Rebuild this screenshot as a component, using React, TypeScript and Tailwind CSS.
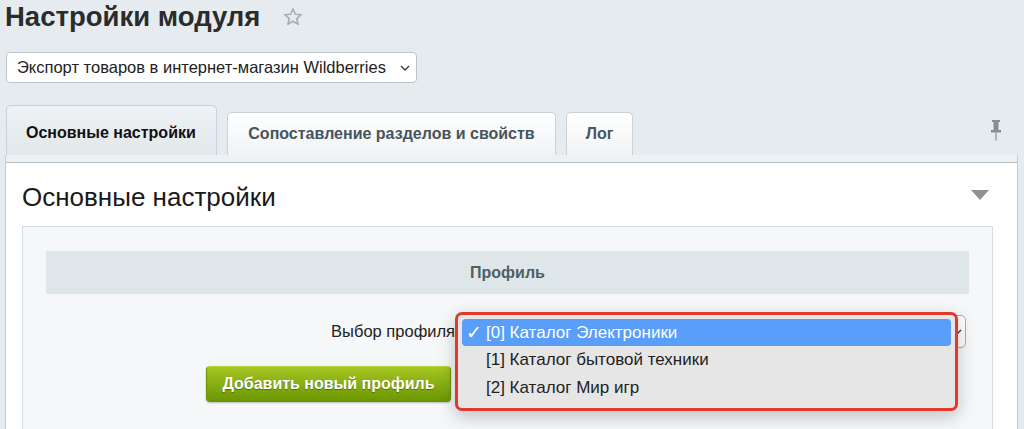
import React from "react";

const menuItems = [
  "[0] Каталог Электроники",
  "[1] Каталог бытовой техники",
  "[2] Каталог Мир игр",
];

function Star() {
  return (
    <svg width="20" height="20" viewBox="0 0 20 20" className="ml-[23px]">
      <path
        d="M10 1.8 L12.3 7.2 L18.2 7.7 L13.7 11.5 L15.1 17.3 L10 14.2 L4.9 17.3 L6.3 11.5 L1.8 7.7 L7.7 7.2 Z"
        fill="none"
        stroke="#a4aeb6"
        strokeWidth="1.6"
        strokeLinejoin="round"
      />
    </svg>
  );
}

function Pin() {
  return (
    <svg width="12" height="21" viewBox="0 0 12 21">
      <rect x="2" y="0" width="8" height="2" fill="#878e93" />
      <rect x="3.5" y="2" width="5" height="8" fill="#878e93" />
      <rect x="1" y="10" width="10" height="2.5" fill="#878e93" />
      <rect x="5.4" y="12.5" width="1.2" height="8" fill="#878e93" />
    </svg>
  );
}

function Chevron({ className }: { className?: string }) {
  return (
    <svg width="10" height="6" viewBox="0 0 10 6" className={className}>
      <path d="M1 1 L5 5 L9 1" fill="none" stroke="#333" strokeWidth="1.3" />
    </svg>
  );
}

function App() {
  return (
    <div className="w-[1024px] h-[429px] overflow-hidden bg-[#e5ebee] font-['Liberation_Sans',Arial,sans-serif]">
      {/* title */}
      <div className="flex items-center pl-[5px] mt-[2px] h-[30px]">
        <h1 className="text-[27.5px] leading-[30px] font-bold text-[#2b2b2b] whitespace-nowrap">Настройки модуля</h1>
        <Star />
      </div>

      {/* module select */}
      <div className="ml-[6px] mt-[20px] w-[411px] h-[31px] flex items-center justify-between pl-[10px] pr-[6px] bg-white border border-[#bfc4c8] rounded-[4px]">
        <span className="text-[16.5px] text-[#222] whitespace-nowrap">Экспорт товаров в интернет-магазин Wildberries</span>
        <Chevron />
      </div>

      {/* tabs */}
      <div className="flex items-end gap-[10px] ml-[6px] mt-[22px] h-[50px]">
        <div className="w-[211px] h-[50px] flex items-center pt-[4px] pl-[19px] rounded-t-[5px] border border-b-0 border-[#c8d1d5] bg-gradient-to-b from-[#eef2f4] to-[#e1e7ea]">
          <span className="text-[16px] font-bold text-[#111] whitespace-nowrap">Основные настройки</span>
        </div>
        <div className="w-[329px] h-[43px] flex items-center justify-center rounded-t-[5px] border border-b-0 border-[#c8d1d5] bg-gradient-to-b from-[#ffffff] to-[#f0f3f5]">
          <span className="text-[16px] font-bold text-[#46545c] whitespace-nowrap">Сопоставление разделов и свойств</span>
        </div>
        <div className="w-[67px] h-[43px] flex items-center justify-center rounded-t-[5px] border border-b-0 border-[#c8d1d5] bg-gradient-to-b from-[#ffffff] to-[#f0f3f5]">
          <span className="text-[16px] font-bold text-[#46545c]">Лог</span>
        </div>
        <div className="ml-auto self-start mt-[15px] mr-[22px]">
          <Pin />
        </div>
      </div>

      {/* panel */}
      <div className="ml-[5px] w-[1013px] border-x border-[#c4cdd2] bg-white">
        <div className="h-[8px] bg-[#edf1f3] border-b border-[#b3bdc2]" />
        <div className="flex items-start justify-between pl-[16px] pr-[28px] pt-[19px]">
          <h2 className="text-[26px] leading-[30px] text-[#1a1a1a]">Основные настройки</h2>
          <svg width="18" height="10" viewBox="0 0 18 10" className="mt-[8px]">
            <path d="M0 0 L18 0 L9 10 Z" fill="#8b9195" />
          </svg>
        </div>

        {/* inner box */}
        <div className="ml-[16px] mt-[14px] w-[971px] h-[220px] border border-[#d5dde1] bg-[#f5f7f8] px-[23px] pt-[24px]">
          <div className="h-[43px] flex items-center justify-center bg-[#dfe6e9]">
            <span className="text-[16px] font-bold text-[#4d5f68]">Профиль</span>
          </div>

          <div className="grid grid-cols-[409px_506px] gap-x-[5px] mt-[21px]">
            <div className="flex items-center justify-end h-[33px]">
              <span className="text-[16.5px] text-[#222] whitespace-nowrap">Выбор профиля</span>
            </div>
            <div className="relative h-[33px]">
              <div className="h-[33px] w-[506px] flex items-center justify-end pr-[3px] bg-white border border-[#aaaaaa] rounded-[5px]">
                <Chevron />
              </div>

              {/* open dropdown */}
              <div className="absolute left-[-5px] top-[-3px] w-[503px] h-[99px] border-[3px] border-[#e2392e] rounded-[7px] bg-[#e6e6e6] pt-[4px] px-[4px] shadow-[0_6px_18px_rgba(0,0,0,0.22)]">
                {menuItems.map((item, i) => (
                  <div
                    key={item}
                    className={
                      i === 0
                        ? "h-[27px] flex items-center rounded-[4px] bg-[#599ef9] text-white"
                        : "h-[28px] flex items-center text-[#222]"
                    }
                  >
                    <span className="w-[24px] pl-[4px] text-[19px] leading-none">{i === 0 ? "✓" : ""}</span>
                    <span className="text-[17px] whitespace-nowrap">{item}</span>
                  </div>
                ))}
              </div>
            </div>

            <div className="flex justify-end pr-[4px] mt-[18px]">
              <button className="w-[245px] h-[36px] rounded-[4px] border border-[#6b9300] border-t-[#b6d435] bg-gradient-to-b from-[#a5c622] to-[#6b9700] shadow-[0_1px_2px_rgba(0,0,0,0.25)] text-white text-[16px] font-bold [text-shadow:0_1px_1px_rgba(0,0,0,0.35)]">
                Добавить новый профиль
              </button>
            </div>
          </div>
        </div>
      </div>
    </div>
  );
}

export default App;
